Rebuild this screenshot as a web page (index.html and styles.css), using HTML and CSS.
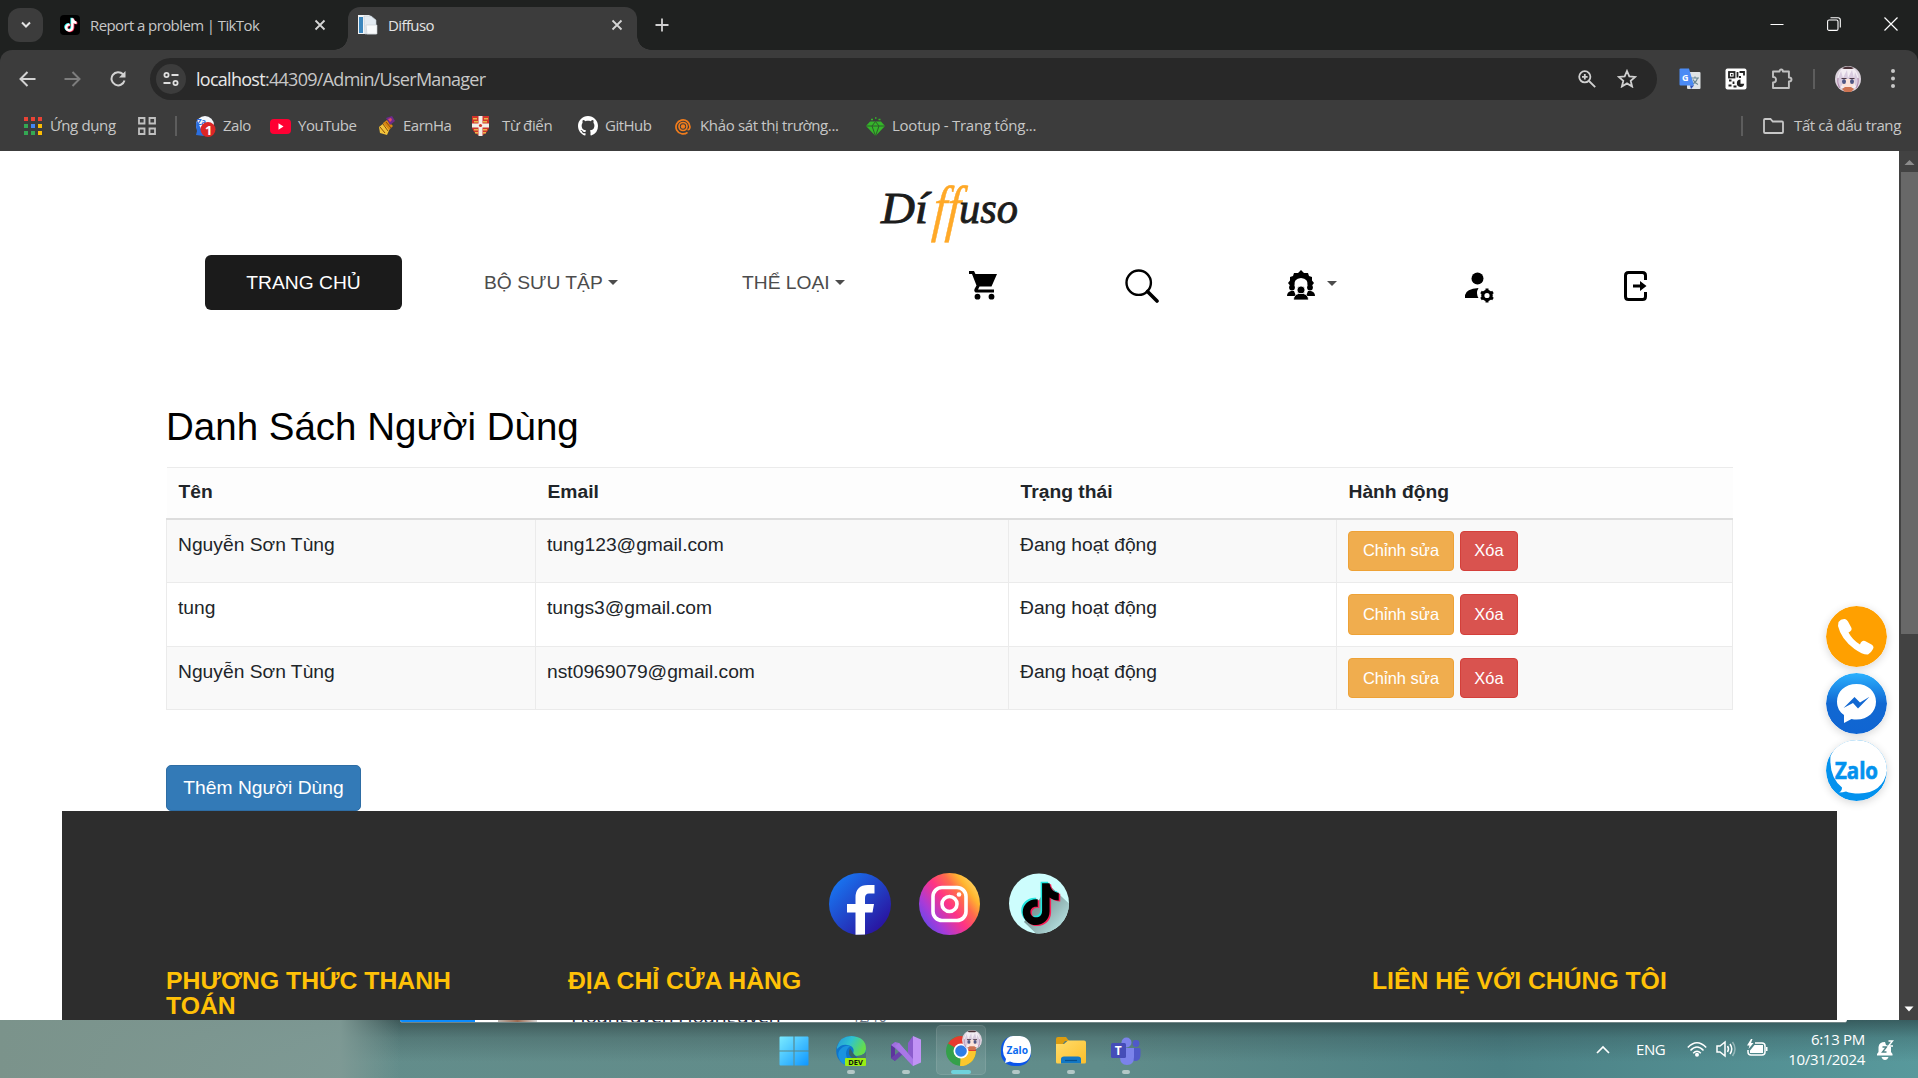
FILE: index.html
```html
<!DOCTYPE html>
<html lang="vi">
<head>
<meta charset="utf-8">
<title>Diffuso</title>
<link rel="stylesheet" href="styles.css">
</head>
<body>
<svg width="0" height="0" class="defs" aria-hidden="true">
  <defs>
    <linearGradient id="gFb" x1="0" y1="0" x2="1" y2="1"><stop offset="0.1" stop-color="#1877f2"/><stop offset="0.9" stop-color="#2a0f9c"/></linearGradient>
    <linearGradient id="gIg" x1="0" y1="0.9" x2="1" y2="0.15"><stop offset="0" stop-color="#4c4df0"/><stop offset="0.25" stop-color="#a83bd8"/><stop offset="0.5" stop-color="#ff3385"/><stop offset="0.68" stop-color="#ff6a4d"/><stop offset="0.82" stop-color="#ffb62f"/><stop offset="1" stop-color="#ffe07a"/></linearGradient>
    <linearGradient id="gMs" x1="0" y1="0" x2="0" y2="1"><stop offset="0" stop-color="#2bb1ff"/><stop offset="0.5" stop-color="#1168d2"/><stop offset="1" stop-color="#1065d2"/></linearGradient>
    <linearGradient id="gWin" gradientUnits="userSpaceOnUse" x1="0" y1="0" x2="30" y2="30"><stop offset="0" stop-color="#7cecff"/><stop offset="1" stop-color="#0d95ff"/></linearGradient>
    <linearGradient id="gEdge" x1="0" y1="0" x2="1" y2="0.4"><stop offset="0" stop-color="#2496dc"/><stop offset="0.5" stop-color="#2fc3cf"/><stop offset="1" stop-color="#66dd4b"/></linearGradient>
    <linearGradient id="gFold" x1="0" y1="0" x2="1" y2="1"><stop offset="0" stop-color="#ffdc6b"/><stop offset="1" stop-color="#fcbf2b"/></linearGradient>
    <linearGradient id="gShade" x1="0.4" y1="0.4" x2="1" y2="1"><stop offset="0" stop-color="#7f9c9c"/><stop offset="1" stop-color="#c4f3f3"/></linearGradient>
    <symbol id="note" viewBox="0 0 24 24"><path d="M13 2h3.6c.3 2.700 1.800 4.300 4.400 4.600V10.300c-1.700 0-3.200-.5-4.400-1.400V15.500c0 4-3 6.600-6.500 6.600S3.700 19.300 3.700 15.900c0-3.800 3.200-6.600 7.200-6.200v3.700c-1.900-.5-3.500.6-3.500 2.400 0 1.500 1.200 2.600 2.700 2.600 1.700 0 2.900-1.100 2.900-3.200z"/></symbol>
    <symbol id="close" viewBox="0 0 12 12"><path d="M1.500 1.500l9 9M10.500 1.500l-9 9" stroke="currentColor" stroke-width="1.800"/></symbol>
    <symbol id="avatar" viewBox="0 0 26 26"><circle cx="13" cy="13" r="13" fill="#dcd3dd"/><path d="M3 10Q5 1 13 1t10 9l1 9-4 3H6l-4-3z" fill="#f3edf3"/><path d="M7 2Q13-1 19 2L17 3H9z" fill="#4b3238"/><path d="M6 11h14v6q-2 5-7 5t-7-5z" fill="#fbe3da"/><path d="M3 13l3-8 2 7 4-8 1 8 4-8 2 8 1-6 3 7v9l-3-3-1-6H8l-1 6-3 4z" fill="#d9ccdf"/><path d="M3 12q-1 6 2 10M23 12q1 6-2 10" fill="none" stroke="#b48fb0" stroke-width="1.200"/><path d="M6.500 12.500h5M14.500 12.500h5" stroke="#4e3a48" stroke-width="1.200"/><ellipse cx="9" cy="15.500" rx="2" ry="2.500" fill="#4f5785"/><ellipse cx="17" cy="15.500" rx="2" ry="2.500" fill="#4f5785"/><path d="M7 23l3-2h6l3 2-3 3h-6z" fill="#cd7452"/></symbol>
  </defs>
</svg>

<header class="browser">
  <div class="tabs">
    <div class="tab-search"><svg width="12" height="10" viewBox="0 0 12 10"><path d="M2 2.500l4 4 4-4" fill="none" stroke="#e3e3e3" stroke-width="2"/></svg></div>
    <div class="tab tab-idle">
      <svg width="20" height="20" viewBox="0 0 20 20"><rect width="20" height="20" rx="4" fill="#000"/><use href="#note" x="1.700" y="1.500" width="16" height="16" fill="#25f4ee"/><use href="#note" x="3.300" y="2.500" width="16" height="16" fill="#fe2c55"/><use href="#note" x="2.500" y="2" width="16" height="16" fill="#fff"/></svg>
      <span class="tab-title">Report a problem | TikTok</span>
      <svg class="x" width="12" height="12"><use href="#close"/></svg>
    </div>
    <div class="tab tab-active">
      <svg width="20" height="20" viewBox="0 0 20 20"><path d="M0 0h11l3 2v17H0z" fill="#f3f5f7"/><path d="M1 2h4v16H1z" fill="#3b86bd"/><path d="M6 1h7l5 4v14H7z" fill="#e3ebf2" stroke="#bfc9d1" stroke-width=".6"/><path d="M8 10h11v9H9z" fill="#f9fbfc" stroke="#c8cdd2" stroke-width=".6"/></svg>
      <span class="tab-title">Diffuso</span>
      <svg class="x" width="12" height="12"><use href="#close"/></svg>
    </div>
    <svg class="plus" width="14" height="14" viewBox="0 0 14 14"><path d="M7 .5v13M.5 7h13" stroke="#d0d0d0" stroke-width="1.800"/></svg>
    <div class="winctl">
      <svg width="14" height="14" viewBox="0 0 14 14"><path d="M.5 7.500h13" stroke="#fff"/></svg>
      <svg width="14" height="14" viewBox="0 0 14 14"><g fill="none" stroke="#fff" stroke-width="1.100"><rect x=".6" y="3" width="10.400" height="10.400" rx="1.500"/><path d="M3.500.7h7.500q2.300 0 2.300 2.300v7.500"/></g></svg>
      <svg width="14" height="14" viewBox="0 0 14 14"><path d="M.5.5l13 13M13.500.5l-13 13" stroke="#fff" stroke-width="1.200"/></svg>
    </div>
  </div>
  <div class="toolbar">
    <svg class="back" width="17" height="16" viewBox="0 0 17 16"><path d="M16.500 8H2M8.500 1L1.500 8l7 7" fill="none" stroke="#d2d2d2" stroke-width="2"/></svg>
    <svg class="fwd" width="17" height="16" viewBox="0 0 17 16"><path d="M.5 8H15M8.500 1l7 7-7 7" fill="none" stroke="#7d7d7d" stroke-width="2"/></svg>
    <svg class="reload" width="16" height="16" viewBox="0 0 16 16"><path d="M14.500 9.500A6.600 6.600 0 1 1 13 3.300L14.500 5" fill="none" stroke="#d2d2d2" stroke-width="2"/><path d="M15.500 0v6.500H9z" fill="#d2d2d2"/></svg>
    <div class="omnibox">
      <div class="site"><svg width="16" height="14" viewBox="0 0 16 14"><g fill="none" stroke="#dedede" stroke-width="1.800"><circle cx="3.500" cy="3" r="2.100"/><path d="M8.500 3h7M.5 11h7"/><circle cx="12.500" cy="11" r="2.100"/></g></svg></div>
      <span class="url"><b>localhost</b>:44309/Admin/UserManager</span>
      <svg class="mag" width="18" height="18" viewBox="0 0 18 18"><g fill="none" stroke="#d0d0d0" stroke-width="1.800"><circle cx="6.800" cy="6.800" r="5.600"/><path d="M11 11l6.200 6.200M6.800 4v5.600M4 6.800h5.600"/></g></svg>
      <svg class="star" width="20" height="19" viewBox="0 0 20 19"><path d="M10 2l2.300 5.400 5.900.5-4.500 3.900 1.400 5.700L10 14.400 4.900 17.500l1.400-5.700L1.800 7.900l5.900-.5z" fill="none" stroke="#d0d0d0" stroke-width="1.800"/></svg>
    </div>
    <div class="exts">
      <svg width="22" height="22" viewBox="0 0 22 22"><rect x="8" y="4" width="13.500" height="17" rx="1" fill="#dfe3e6"/><path d="M12 10h8M16 8.500V10M18.500 10q-1 4-5 6M14 11.500q1.500 3.500 5 5" fill="none" stroke="#6b8791" stroke-width="1.100"/><path d="M1.500.5H10l5 17H1.500q-1 0-1-1V1.500q0-1 1-1z" fill="#4b8bf5"/><path d="M11 17.500h4L12 21z" fill="#2b50b8"/><text x="3" y="12.500" class="g-let">G</text></svg>
      <svg width="22" height="22" viewBox="0 0 22 22"><rect x=".5" y=".5" width="21" height="21" rx="2" fill="#fff"/><g fill="none" stroke="#222" stroke-width="1.800"><rect x="4" y="4" width="5.500" height="5.500"/><path d="M12.500 4v5.500M14.500 4h4.500v3.500M14 9h2M4 12.500h2.500M8.500 13.500v2.500M3.500 17.500h3M8.500 18.500h3"/></g><rect x="6" y="6" width="1.600" height="1.600" fill="#222"/><path d="M15.500 11.500a3.700 3.700 0 1 0 3.700 4.200h-3.700z" fill="#222"/></svg>
      <svg width="22" height="22" viewBox="0 0 22 22"><path d="M2 3.500h6.500q0-2 1.700-2t1.700 2h6v6q2.600 0 2.600 2t-2.600 2V20H2v-5.500q3 0 3-2.800T2 9z" fill="none" stroke="#c0c0c0" stroke-width="1.900" stroke-linejoin="round"/></svg>
      <i class="vbar"></i>
      <svg class="me" width="26" height="26"><use href="#avatar"/></svg>
      <svg class="dots" width="4" height="19" viewBox="0 0 4 19"><g fill="#c8c8c8"><circle cx="2" cy="2" r="2"/><circle cx="2" cy="9.500" r="2"/><circle cx="2" cy="17" r="2"/></g></svg>
    </div>
  </div>
  <nav class="bookmarks">
    <a class="bm b-apps"><svg width="18" height="18" viewBox="0 0 18 18"><g><path d="M0 0h4v4H0zM7 0h4v4H7zM14 0h4v4h-4z" fill="#ea4335"/><path d="M0 7h4v4H0zM0 14h4v4H0zM7 14h4v4H7z" fill="#34a853"/><path d="M7 7h4v4H7z" fill="#4285f4"/><path d="M14 7h4v4h-4zM14 14h4v4h-4z" fill="#fbbc04"/></g></svg><span>Ứng dụng</span></a>
    <svg class="b-grid" width="18" height="18" viewBox="0 0 18 18"><g fill="none" stroke="#c0c0c0" stroke-width="1.800"><path d="M1 1h5.500v5.500H1zM11.500 1H17v5.500h-5.500zM1 11.500h5.500V17H1zM11.500 11.500H17V17h-5.500z"/></g></svg>
    <i class="vbar"></i>
    <a class="bm b-zalo"><svg width="21" height="21" viewBox="0 0 21 21"><circle cx="10" cy="9" r="9" fill="#f5f8fc"/><path d="M2 4q-2 5 0 11l-1 4 8 1z" fill="#2b6fe0"/><text x="2" y="9" class="z-mini">Za</text><circle cx="13" cy="13.500" r="7.500" fill="#dc2626"/><text x="10" y="18.500" class="one">1</text></svg><span>Zalo</span></a>
    <a class="bm b-yt"><svg width="21" height="15" viewBox="0 0 21 15"><rect width="21" height="15" rx="4" fill="#ff0033"/><path d="M8.500 4.300l5 3.200-5 3.200z" fill="#fff"/></svg><span>YouTube</span></a>
    <a class="bm b-earn"><svg width="18" height="20" viewBox="0 0 18 20"><path d="M1 11l5-4 6 5-3 7-7-2z" fill="#f3c33a"/><path d="M5 7l4-3 6 6-4 4z" fill="#d88613"/><path d="M8 2l6-2 3 5-5 4z" fill="#6d2a8c"/><path d="M10 3l3-1 1 2-2 2z" fill="#e2486a"/><path d="M2 11l5 6M5 8l5 7M8 6l5 6" stroke="#8a4d08"/></svg><span>EarnHa</span></a>
    <a class="bm b-dict"><svg width="19" height="20" viewBox="0 0 19 20"><path d="M1 0h17v12q-2 6-8.500 8Q3 18 1 12z" fill="#d2342c"/><path d="M7.500 0h4v20h-4zM1 7.500h17v4H1z" fill="#f3f0e8"/><g fill="#e9b54a"><path d="M2 2h4v1.500H2zM3 5h4v1.500H3zM13 2h4v1.500h-4zM12 5h4v1.500h-4zM3 13h4v1.500H3zM12 13h4v1.500h-4zM4 16h3v1.500H4zM12 16h3v1.500h-3z"/></g><circle cx="9.500" cy="9.500" r="1.600" fill="#d2342c"/></svg><span>Từ điển</span></a>
    <a class="bm b-git"><svg width="20" height="20" viewBox="0 0 16 16"><path fill="#fff" d="M8 0C3.580 0 0 3.580 0 8c0 3.540 2.290 6.530 5.470 7.590.4.070.55-.17.55-.38 0-.19-.01-.82-.01-1.490-2.010.37-2.530-.49-2.690-.94-.09-.23-.48-.94-.82-1.130-.28-.15-.68-.52-.01-.53.63-.01 1.080.58 1.230.82.72 1.210 1.870.87 2.330.66.07-.52.28-.87.51-1.070-1.780-.2-3.640-.89-3.640-3.950 0-.87.31-1.590.82-2.150-.08-.2-.36-1.020.08-2.120 0 0 .67-.21 2.200.82.640-.18 1.320-.27 2-.27s1.360.09 2 .27c1.530-1.040 2.200-.82 2.200-.82.440 1.100.160 1.920.080 2.120.510.560.820 1.270.820 2.150 0 3.070-1.870 3.750-3.650 3.950.290.250.540.730.540 1.480 0 1.070-.010 1.930-.010 2.200 0 .210.150.460.550.380A8.010 8.010 0 0 0 16 8c0-4.420-3.580-8-8-8z"/></svg><span>GitHub</span></a>
    <a class="bm b-survey"><svg width="16" height="17" viewBox="0 0 16 17"><g fill="none" stroke="#f07c1c" stroke-width="1.700"><path d="M12.500 14.300A7 7 0 1 1 15 9q-.3 3-2.500 2.500"/><circle cx="8" cy="8.500" r="4"/></g><circle cx="8" cy="8.500" r="2.200" fill="#f07c1c"/></svg><span>Khảo sát thị trường...</span></a>
    <a class="bm b-loot"><svg width="19" height="19" viewBox="0 0 19 19"><path d="M4 4.500h11l4 4.500-9.500 10L0 9z" fill="#35b52a"/><path d="M0 9h19M6 9l3.500 10L13 9M6 9l3.500-4.500L13 9" fill="none" stroke="#2f5c2b"/><path d="M5 2.500h2M9 1h1.500M12.500 2.500h2" stroke="#35b52a" stroke-width="1.600"/></svg><span>Lootup - Trang tổng...</span></a>
    <i class="vbar vbar-right"></i>
    <a class="bm b-all"><svg width="21" height="16" viewBox="0 0 21 16"><path d="M1 2q0-1 1-1h5.500l2.300 2.500H19q1 0 1 1V14q0 1-1 1H2q-1 0-1-1z" fill="none" stroke="#c8c8c8" stroke-width="1.800"/></svg><span>Tất cả dấu trang</span></a>
  </nav>
</header>

<div class="viewport">
  <div class="page">
    <div class="logo">
      <svg width="150" height="64" viewBox="0 0 150 64">
        <text class="lg" x="6" y="41" textLength="47" lengthAdjust="spacingAndGlyphs">Dí</text>
        <text class="lg-ff" x="58" y="47" textLength="27" lengthAdjust="spacingAndGlyphs">ff</text>
        <text class="lg" x="84" y="41" textLength="59" lengthAdjust="spacingAndGlyphs">uso</text>
      </svg>
    </div>
    <nav class="menu">
      <a class="home">TRANG CHỦ</a>
      <a class="drop m-col">BỘ SƯU TẬP<i class="caret"></i></a>
      <a class="drop m-cat">THỂ LOẠI<i class="caret"></i></a>
      <svg class="m-cart" width="28" height="29" viewBox="0 0 28 29"><path d="M0 0h5l1.500 3H28l-5.500 12.500H10.500L9 18.500h16V21.500H6.500Q4.500 20 5.500 18l2-3.500L3 3H0z"/><circle cx="8.500" cy="25.700" r="2.900"/><circle cx="22.500" cy="25.700" r="2.900"/></svg>
      <svg class="m-search" width="34" height="34" viewBox="0 0 34 34"><circle cx="13.700" cy="13.700" r="12.200" fill="none" stroke="#000" stroke-width="2.400"/><path d="M22.500 22.500L32 32" stroke="#000" stroke-width="3.600" stroke-linecap="round"/></svg>
      <a class="m-users"><svg width="28" height="30" viewBox="0 0 28 30"><path d="M3 15.500L1 13l2-2.500V7l3-1 1-3h4l3-3 3 3h4l1 3 3 1v3.500L27 13l-2 2.500h-4.500q1-7-6.500-7.500-7.500.5-6.500 7.500z"/><circle cx="5" cy="17.500" r="2.900"/><circle cx="23" cy="17.500" r="2.900"/><path d="M0 26q0-4 4-5h3l2 5zM28 26q0-4-4-5h-3l-2 5z"/><circle cx="14" cy="20" r="4" stroke="#fff" stroke-width=".8"/><path d="M6.500 30q0-5 5-6.500h5q5 1.500 5 6.500z" stroke="#fff" stroke-width=".8"/></svg><i class="caret"></i></a>
      <svg class="m-gear" width="29" height="31" viewBox="0 0 29 31"><circle cx="12.500" cy="6.500" r="6"/><path d="M0 26v-3q1-6 13.500-7-3 5 0 10z"/><circle cx="22" cy="23.500" r="4.200" fill="none" stroke="#000" stroke-width="3.200"/><path d="M22 16.500v3M22 27.500v3M16 20l2.500 1.500M25.500 25.500L28 27M16 27l2.500-1.500M25.500 21.500L28 20" stroke="#000" stroke-width="3"/></svg>
      <svg class="m-exit" width="24" height="30" viewBox="0 0 24 30"><path d="M21.500 9V4.500q0-3-3-3h-14q-3 0-3 3v21q0 3 3 3h14q3 0 3-3V21" fill="none" stroke="#000" stroke-width="3"/><path d="M9 13.500h7V10l6.500 5-6.500 5v-3.500H9z"/></svg>
    </nav>

    <main class="content">
      <h2>Danh Sách Người Dùng</h2>
      <table>
        <colgroup><col class="c1"><col class="c2"><col class="c3"><col class="c4"></colgroup>
        <thead><tr><th>Tên</th><th>Email</th><th>Trạng thái</th><th>Hành động</th></tr></thead>
        <tbody>
          <tr class="tall"><td>Nguyễn Sơn Tùng</td><td>tung123@gmail.com</td><td>Đang hoạt động</td><td><div class="acts"><button class="btn edit">Chỉnh sửa</button><button class="btn del">Xóa</button></div></td></tr>
          <tr class="tall mid"><td>tung</td><td>tungs3@gmail.com</td><td>Đang hoạt động</td><td><div class="acts"><button class="btn edit">Chỉnh sửa</button><button class="btn del">Xóa</button></div></td></tr>
          <tr><td>Nguyễn Sơn Tùng</td><td>nst0969079@gmail.com</td><td>Đang hoạt động</td><td><div class="acts"><button class="btn edit">Chỉnh sửa</button><button class="btn del">Xóa</button></div></td></tr>
        </tbody>
      </table>
      <button class="btn add">Thêm Người Dùng</button>
    </main>

    <footer class="footer">
      <div class="social">
        <svg width="62" height="62" viewBox="0 0 62 62"><circle cx="31" cy="31" r="31" fill="url(#gFb)"/><path d="M26.500 61.700V39.500H18V31h8.500v-6.500Q26.500 12 39 12h6.500v8.500H40q-4 0-4 4.500v6h9l-1.500 8.500H36v22z" fill="#fff"/></svg>
        <svg width="61" height="62" viewBox="0 0 61 62"><ellipse cx="30.500" cy="31" rx="30.500" ry="31" fill="url(#gIg)"/><g fill="none" stroke="#fff" stroke-width="3.600"><rect x="14" y="14.500" width="33" height="33" rx="9"/><circle cx="30.500" cy="31" r="7.500"/></g><circle cx="40" cy="21.500" r="2.300" fill="#fff"/></svg>
        <svg width="60" height="61" viewBox="0 0 60 61"><circle cx="30" cy="30.500" r="30" fill="#cdfdfd"/><path d="M40 12l20 18.500A30 30 0 0 1 30 60.500h-3L15 49z" fill="url(#gShade)"/><use href="#note" x="4.500" y="4.500" width="50" height="50" fill="#20e6df"/><use href="#note" x="8.500" y="8" width="50" height="50" fill="#fb1f58" transform="translate(-1 -1)"/><use href="#note" x="6" y="6" width="50" height="50" fill="#000"/></svg>
      </div>
      <div class="cols">
        <h3 class="f1">PHƯƠNG THỨC THANH TOÁN</h3>
        <h3 class="f2">ĐỊA CHỈ CỬA HÀNG</h3>
        <h3 class="f3">LIÊN HỆ VỚI CHÚNG TÔI</h3>
      </div>
    </footer>
  </div>
  <div class="scroll">
    <svg width="19" height="21" viewBox="0 0 19 21"><path d="M5.500 14l5-5 5 5z" fill="#8c8c8c"/></svg>
    <div class="thumb"></div>
    <svg class="down" width="19" height="21" viewBox="0 0 19 21"><path d="M5.500 7.500h9l-4.500 5z" fill="#fff"/></svg>
  </div>
  <div class="contact">
    <svg width="61" height="61" viewBox="0 0 61 61"><circle cx="30.500" cy="30.500" r="30.500" fill="#ffa000"/><path d="M12.500 16q2.500-3.500 6.500-3 2 .5 3 2.500l3.500 6.500q.8 2.500-3 4.500 4 7.500 11.500 12 1.500-4.500 5-3.500l6.500 3.500q3 2 1.500 4.500-2 4-5 5.500-5 .5-13.500-5.500Q15 33 12 20z" fill="#fff"/></svg>
    <svg width="61" height="61" viewBox="0 0 61 61"><circle cx="30.500" cy="30.500" r="30.500" fill="url(#gMs)"/><path d="M30.500 11C19 11 11 18.500 11 28.500c0 6 2.600 10.500 7 13.500v8l7.500-4q2.500.6 5 .6C42 46.500 50 39 50 28.800S42 11 30.500 11z" fill="#fff"/><path d="M17.500 35l11-11 5.500 5.500 9.500-5.800L32 35.500 27 30z" fill="#1268d2"/></svg>
    <svg width="61" height="61" viewBox="0 0 61 61"><circle cx="30.500" cy="30.500" r="30.500" fill="#0392ee"/><path d="M30.500 0A30.500 30.500 0 0 1 61 31Q57 53 33 53.500q-8 0-13-2-3 1-7 1 3-1.500 3-5Q3 37 4.500 16 12 0 30.500 0z" fill="#fff"/><text class="zalo-big" x="9" y="38.500" textLength="43" lengthAdjust="spacingAndGlyphs">Zalo</text></svg>
  </div>
</div>

<div class="taskbar">
  <div class="peek"><i class="pk-blue"></i><i class="pk-face"></i><span class="pk-name">Hoanguyen Hoanguyen</span><span class="pk-num">12/10</span></div>
  <div class="apps">
    <div class="app"><svg width="30" height="30" viewBox="0 0 30 30"><path d="M1.500.5h13v14H.5v-13q0-1 1-1zM15.500.5h13q1 0 1 1v13h-14zM.5 15.500h14v14h-13q-1 0-1-1zM15.500 15.500h14v13q0 1-1 1h-13z" fill="url(#gWin)"/></svg></div>
    <div class="app run"><svg width="30" height="30" viewBox="0 0 30 30"><circle cx="15" cy="15" r="14.800" fill="#0d74cc"/><path d="M1 11Q4 0 15.500 0 30 1 30 13q-.5 7-9 7-5-.5-3.500-4 1-5-4-6.500Q6 7 1 13z" fill="url(#gEdge)"/><path d="M14 10q-6 5-3 12 4 6 11 6-9 4-16-1-8-10 1-16 4-2 7-1z" fill="#1a93df"/><path d="M14 12q-3 6 2 10h5l-4-5z" fill="#36646b"/><path d="M21 20q5 0 9-4v6h-9z" fill="#4d7473"/><rect x="9" y="22" width="21" height="8" rx="1" fill="#9aef12"/><text x="12.200" y="29" class="dev">DEV</text></svg></div>
    <div class="app run"><svg width="30" height="30" viewBox="0 0 30 30"><path d="M0 9l4-3v19l-4-3z" fill="#5c359c"/><path d="M0 22l9-7 3 3-8 7z" fill="#6a41aa"/><path d="M0 9l4-3 4 1 15 17v6L4 12z" fill="#9f70de"/><path d="M22 0l8 3.500v23L22 30z" fill="#c193f5"/><path d="M22 0v30l-5-6V7z" fill="#8b5ccd"/><path d="M8 7l14 16v7l-5-5L4 10z" fill="#a878e6"/></svg></div>
    <div class="app run on"><svg width="50" height="42" viewBox="0 0 50 42"><circle cx="25" cy="25" r="15" fill="#34a04a"/><path d="M25 25L12 17.500A15 15 0 0 1 40 25z" fill="#e63b2f"/><path d="M25 25h15a15 15 0 0 1-16 15z" fill="#fdc72e"/><circle cx="25" cy="25" r="7.500" fill="#fff"/><circle cx="25" cy="25" r="5.800" fill="#2f7de6"/><use href="#avatar" x="26" y="4" width="20" height="20"/></svg></div>
    <div class="app run"><svg width="30" height="30" viewBox="0 0 30 30"><rect width="30" height="30" rx="13" fill="#0a55ea"/><path d="M12 0h7q11 1 11 14 0 12-11 13-6 .5-10-1.500l-5 1.500 1-4Q0 17 3 8q3-8 9-8z" fill="#fff"/><text x="5.500" y="17.500" class="zalo-sm" textLength="21.500" lengthAdjust="spacingAndGlyphs">Zalo</text></svg></div>
    <div class="app run"><svg class="folder" width="30" height="28" viewBox="0 0 30 28"><path d="M0 2q0-2 2-2h8l3 4h-4L6 8H0z" fill="#dc9c10"/><path d="M0 7h8l4-3.500h16q2 0 2 2V25q0 1.500-1.500 1.500h-27Q0 26.500 0 25z" fill="url(#gFold)"/><path d="M5 26.500V22q0-2.500 3-2.500h14q3 0 3 2.500v4.500z" fill="#1378c5"/><path d="M9 23.500h12" stroke="#08508f" stroke-width="1.200"/></svg></div>
    <div class="app run"><svg class="folder" width="30" height="28" viewBox="0 0 30 28"><circle cx="15.500" cy="5.500" r="5" fill="#7b83eb"/><circle cx="25" cy="6.500" r="3.400" fill="#5059c9"/><path d="M20 11h8q1.500 0 1.500 1.500V18q0 6-6 6-3.500-1-3.500-3z" fill="#5059c9"/><path d="M9 11h14v9q0 8-7 8t-7-8z" fill="#7b83eb"/><rect y="6" width="15" height="15" rx="1.500" fill="#454db8"/><text x="3.700" y="18" class="tee">T</text></svg></div>
  </div>
  <div class="tray">
    <svg class="up" width="14" height="9" viewBox="0 0 14 9"><path d="M1 8l6-6 6 6" fill="none" stroke="#fff" stroke-width="1.700"/></svg>
    <span class="lang">ENG</span>
    <svg class="wifi" width="20" height="16" viewBox="0 0 20 16"><g fill="none" stroke="#fff" stroke-width="1.500"><path d="M.8 6.500q9.200-9.500 18.400 0M3.500 9.500q6.500-7 13 0M6.200 12.300q3.800-4 7.600 0"/></g><circle cx="10" cy="13.800" r="2"/></svg>
    <svg class="vol" width="20" height="18" viewBox="0 0 20 18"><g fill="none" stroke="#fff" stroke-width="1.500"><path d="M1 6v6h3l5 4V2L4 6z"/><path d="M11.500 6q2 3 0 6M14 4q3.500 5 0 10"/><path d="M16.500 2q5 7 0 14" opacity=".4"/></g></svg>
    <svg class="bat" width="21" height="17" viewBox="0 0 21 17"><path d="M8 4h7q3 0 3 3v6q0 3-3 3H4q-3 0-3-3v-2" fill="none" stroke="#fff" stroke-width="1.500"/><path d="M19 8h1.500v4H19zM7.500 6H16v8H3v-2.500z"/><path d="M4 0L0 6.500h2.500L1.500 10 6.500 4H4L5.500 0z"/></svg>
    <div class="clock"><span>6:13 PM</span><span>10/31/2024</span></div>
    <svg class="bell" width="18" height="20" viewBox="0 0 18 20"><path d="M1 15.500V14l1.500-2V7Q3 2 9 2l1 3 5 2v5l1.500 2v1.500zM5.500 17h7q-1 3-3.500 3t-3.500-3z"/><path d="M6.500 7h4l-4 5h4" fill="none" stroke="#4f8487" stroke-width="1.400"/><path d="M12.500 1h4l-4 5h4.500" fill="none" stroke="#fff" stroke-width="1.400"/></svg>
  </div>
</div>
</body>
</html>
```
FILE: styles.css
```css
* { box-sizing: border-box; }
body { margin: 0; width: 1918px; height: 1078px; overflow: hidden; display: flex; flex-direction: column; background: #fff; font-family: "Liberation Sans", Arial, sans-serif; }
svg { display: block; flex: none; }
.defs { position: absolute; }
i { flex: none; }

/* browser chrome */
.browser { height: 151px; flex: none; background: #1f2120; color: #c7c7c7; font: 15px/20px "Open Sans", "Noto Sans", sans-serif; }
.tabs { height: 50px; display: flex; align-items: flex-start; }
.tab-search { width: 35px; height: 34px; margin: 8px 0 0 8px; border-radius: 12px; background: #3c3c3c; display: flex; align-items: center; justify-content: center; }
.tab { display: flex; align-items: center; }
.tab-idle { width: 305px; height: 34px; margin-top: 8px; padding: 0 22px 0 17px; color: #c7c7c7; }
.tab-active { width: 289px; height: 43px; margin-top: 7px; padding: 0 14px 7px 10px; border-radius: 12px 12px 0 0; background: #3c3c3c; color: #e3e3e3; position: relative; }
.tab-active::before, .tab-active::after { content: ""; position: absolute; bottom: 0; width: 14px; height: 14px; }
.tab-active::before { left: -14px; background: radial-gradient(circle at 0 0, #1f2120 13.500px, #3c3c3c 14px); }
.tab-active::after { right: -14px; background: radial-gradient(circle at 100% 0, #1f2120 13.500px, #3c3c3c 14px); }
.tab-title { margin-left: 10px; letter-spacing: -0.6px; white-space: nowrap; }
.x { margin-left: auto; color: #d5d5d5; }
.plus { margin: 18px 0 0 18px; }
.winctl { margin: 17px 20px 0 auto; display: flex; gap: 43px; }
.toolbar { height: 57px; background: #3c3c3c; border-radius: 12px 12px 0 0; display: flex; align-items: center; padding-left: 19px; }
.fwd { margin-left: 28px; }
.reload { margin-left: 29px; }
.omnibox { margin-left: 24px; width: 1507px; height: 42px; border-radius: 21px; background: #282828; display: flex; align-items: center; padding: 0 20px 0 6px; }
.site { width: 30px; height: 30px; border-radius: 50%; background: #3c3c3c; display: flex; align-items: center; justify-content: center; }
.url { margin-left: 10px; font-size: 18px; letter-spacing: -0.72px; color: #c7c7c7; }
.url b { font-weight: 400; color: #e8e8e8; }
.mag { margin-left: auto; }
.star { margin-left: 21px; }
.exts { margin-left: 22px; display: flex; align-items: center; gap: 24px; }
.exts .vbar { margin-left: -4px; }
.exts .me { margin-left: -4px; }
.exts .dots { margin-left: 6px; }
.g-let { font: bold 9px "Open Sans", sans-serif; fill: #fff; }
.vbar { display: block; width: 2px; height: 20px; background: #5d5d5d; }
.bookmarks { height: 44px; background: #3c3c3c; display: flex; align-items: center; padding: 0 17px 6px 24px; font-size: 15px; letter-spacing: -0.35px; }
.bm { display: flex; align-items: center; gap: 7px; white-space: nowrap; flex: none; }
.bm span { margin: -2px 0 0 0; }
.b-apps { width: 114px; gap: 8px; }
.b-grid { margin-right: 19px; }
.b-zalo { margin-left: 18px; width: 75px; letter-spacing: -0.5px; }
.b-yt { width: 108px; letter-spacing: -0.45px; }
.b-earn { width: 93px; letter-spacing: -0.5px; }
.b-dict { width: 107px; gap: 12px; }
.b-git { width: 97px; letter-spacing: -0.5px; }
.b-survey { width: 191px; gap: 9px; }
.b-loot { letter-spacing: -0.25px; }
.vbar-right { margin-left: auto; }
.b-all { margin-left: 20px; width: 138px; gap: 10px; letter-spacing: -0.38px; }
.z-mini { font: bold 8px "Open Sans", sans-serif; fill: #2b6fe0; }
.one { font: bold 13px "Open Sans", sans-serif; fill: #fff; }

/* web page */
.viewport { height: 869px; flex: none; display: flex; position: relative; }
.page { width: 1899px; display: flex; flex-direction: column; background: #fff; overflow: hidden; }
.logo { height: 64px; margin: 31px 0 0 875px; flex: none; }
.logo svg { overflow: visible; }
.lg { font: italic 44px "Liberation Serif", serif; fill: #1c1c1c; stroke: #1c1c1c; stroke-width: .9; }
.lg-ff { font: italic 62px "Liberation Serif", serif; fill: #ffa928; stroke: #ffa928; stroke-width: .5; transform: skewX(-5deg); transform-origin: 58px 32px; }
.menu { height: 55px; margin: 9px 0 0 205px; flex: none; display: flex; align-items: flex-start; font-size: 19.250px; line-height: 26px; color: #4c4c4c; }
.home { width: 197px; height: 55px; border-radius: 6px; background: #1b1b1b; color: #fff; text-align: center; padding-top: 15px; }
.drop { display: flex; align-items: center; padding-top: 15px; white-space: nowrap; }
.m-col { margin-left: 82px; width: 258px; }
.m-cat { width: 227px; }
.caret { display: block; margin-left: 5px; border: 5.500px solid transparent; border-top-color: #4c4c4c; border-bottom: 0; }
.drop .caret { margin-top: -2px; }
.m-cart { margin-top: 16px; }
.m-search { margin: 14px 0 0 128px; }
.m-users { margin: 15px 0 0 128px; display: flex; }
.m-users .caret { margin: 11px 0 0 12px; }
.m-gear { margin: 17px 0 0 128px; }
.m-exit { margin: 16px 0 0 130px; }
.content { padding: 95px 166px 0; height: 501px; flex: none; }
h2 { margin: 0; font-size: 38.500px; line-height: 44px; font-weight: 400; color: #000; }
table { width: 1566px; margin-top: 18px; border-collapse: collapse; table-layout: fixed; font-size: 19.250px; line-height: 27.500px; color: #212529; }
.c1 { width: 369px; }
.c2 { width: 473px; }
.c3 { width: 328px; }
.c4 { width: 396px; }
th { height: 51px; padding: 9px 12px 11px; text-align: left; background: #fdfdfd; border-top: 1px solid #ebebeb; border-bottom: 2px solid #ddd; line-height: 27px; }
td { height: 63px; padding: 11px 11px 0; vertical-align: top; border: 1px solid #ebebeb; }
tbody tr:nth-child(odd) { background: #f9f9f9; }
.tall td { height: 64px; }
.acts { display: flex; gap: 6px; }
.btn { font-family: inherit; color: #fff; border: 1px solid; padding: 0; display: block; white-space: nowrap; }
.edit, .del { height: 40px; font-size: 16.500px; border-radius: 4px; }
.mid .btn { height: 41px; }
.edit { width: 106px; background: #f0ad4e; border-color: #eea236; }
.del { width: 58px; background: #d9534f; border-color: #d43f3a; }
.add { width: 195px; height: 46px; margin-top: 55px; border-radius: 5px; font-size: 19.250px; background: #337ab7; border-color: #2e6da4; }
.footer { width: 1775px; margin-left: 62px; flex: 1; background: #2d2d2d; }
.social { display: flex; justify-content: flex-start; gap: 28px; padding: 62px 0 0 767px; }
.social svg:last-child { margin-left: 1px; }
.cols { display: flex; padding: 33px 0 0 104px; }
h3 { margin: 0; font-size: 24.750px; line-height: 25px; color: #ffc107; }
.f1 { width: 402px; padding-right: 90px; }
.f2 { width: 804px; }
.scroll { width: 19px; background: #424242; display: flex; flex-direction: column; }
.thumb { width: 17px; height: 462px; margin-left: 2px; background: #686868; }
.down { margin-top: auto; }
.contact { position: absolute; left: 1826px; top: 455px; display: flex; flex-direction: column; gap: 6px; }
.contact svg { border-radius: 50%; box-shadow: 0 2px 8px rgba(0, 0, 0, .16); }
.zalo-big { font: bold 23px "Open Sans", sans-serif; fill: #0392ee; stroke: #0392ee; stroke-width: .7; }

/* desktop taskbar */
.taskbar { height: 58px; flex: none; position: relative; color: #fff; font: 15px/20px "Open Sans", "Noto Sans", sans-serif;
  background:
    linear-gradient(90deg, #7b938b 0, rgba(127, 154, 149, .95) 340px, rgba(127, 154, 149, 0) 400px),
    linear-gradient(180deg, rgba(30, 45, 47, .55) 0, rgba(30, 45, 47, .2) 18px, rgba(30, 45, 47, 0) 42px),
    linear-gradient(90deg, #648d8b 0, #608c8a 1100px, #4c8185 1500px, #58999c 1918px); }
.peek { position: absolute; left: 400px; top: 0; width: 1447px; height: 3px; background: #fff; border-bottom: 1px solid #708586; border-radius: 0 0 8px 8px; overflow: hidden; }
.pk-blue { position: absolute; left: 0; top: 0; width: 75px; height: 2px; background: #0b8cff; }
.pk-face { position: absolute; left: 98px; top: 0; width: 39px; height: 2px; background: linear-gradient(90deg, #b9b4ae, #9c6b52, #d8d8d8); }
.pk-name { position: absolute; left: 171px; top: -14px; font-size: 20px; letter-spacing: -0.5px; color: #1d2b45; }
.pk-num { position: absolute; left: 452px; top: -13px; font-size: 14px; letter-spacing: -0.6px; color: #6a7688; }
.apps { position: absolute; left: 769px; top: 5px; display: flex; gap: 5px; }
.app { width: 50px; height: 50px; padding-top: 11px; display: flex; justify-content: center; align-items: flex-start; position: relative; }
.app:first-child { margin-right: 2px; }
.app.on { padding-top: 1px; border-radius: 5px; background: rgba(255, 255, 255, .09); box-shadow: inset 0 0 0 1px rgba(255, 255, 255, .09); }
.folder { margin-top: 1px; }
.run::after { content: ""; position: absolute; left: 21px; bottom: 1px; width: 8px; height: 4px; border-radius: 2px; background: #b3c8c7; }
.on::after { left: 15px; width: 20px; background: #6fd3dc; }
.dev { font: bold 7.500px "Open Sans", sans-serif; fill: #111; }
.zalo-sm { font: bold 11px "Open Sans", sans-serif; fill: #0a6bf0; }
.tee { font: bold 12px "Open Sans", sans-serif; fill: #fff; }
.tray { height: 58px; padding: 0 24px 0 0; display: flex; justify-content: flex-end; align-items: center; fill: #fff; }
.up { margin-right: 26px; }
.lang { width: 51px; letter-spacing: -0.4px; }
.wifi { margin-right: 9px; }
.vol { margin-right: 11px; }
.bat { margin-top: -3px; }
.clock { width: 97px; display: flex; flex-direction: column; text-align: right; letter-spacing: -0.28px; }
.bell { margin: 2px 0 0 11px; }
```
